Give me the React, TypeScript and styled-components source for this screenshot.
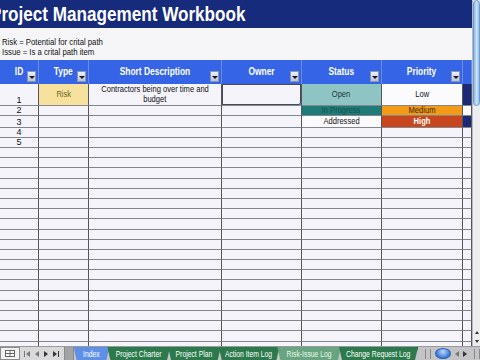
import React from 'react';
import styled, { createGlobalStyle } from 'styled-components';

const FONT = `"Liberation Sans", Arial, sans-serif`;

const GlobalStyle = createGlobalStyle`
  html, body {
    margin: 0;
    padding: 0;
    overflow: hidden;
    background: #f4f4f9;
  }
  body {
    font-family: ${FONT};
  }
`;

const COLS = '39px 50px 133px 80px 80px 81px 9px';

// the source screenshot is horizontally condensed, so text is squeezed to match
const Squeeze = styled.span<{ $left?: boolean; $k?: number }>`
  display: inline-block;
  white-space: nowrap;
  transform: scaleX(${(p) => p.$k ?? 0.84});
  transform-origin: ${(p) => (p.$left ? 'left center' : 'center')};
`;

const Window = styled.div`
  width: 480px;
  height: 360px;
  display: flex;
  flex-direction: column;
  overflow: hidden;
`;

const Body = styled.div`
  flex: 1;
  display: flex;
  min-height: 0;
`;

const Sheet = styled.div`
  width: 472px;
  display: flex;
  flex-direction: column;
  overflow: hidden;
  background: #f4f4f9;
`;

const TitleBar = styled.div`
  height: 28px;
  flex-shrink: 0;
  background: #172b7c;
  overflow: hidden;
  white-space: nowrap;
`;

const Title = styled.h1`
  margin: 0 0 0 -10px;
  color: #fff;
  font: bold 21px/27px ${FONT};
`;

const Notes = styled.div`
  height: 32px;
  flex-shrink: 0;
  box-sizing: border-box;
  display: flex;
  flex-direction: column;
  padding: 10px 0 0 2px;
  font-size: 9px;
  line-height: 9.5px;
  color: #111;
  background: #f6f6f8;
`;

const Row = styled.div<{ $h: number }>`
  display: grid;
  grid-template-columns: ${COLS};
  height: ${(p) => p.$h}px;
  flex-shrink: 0;
`;

const HeadCell = styled.div`
  position: relative;
  box-sizing: border-box;
  display: flex;
  align-items: center;
  justify-content: center;
  padding-bottom: 1px;
  background: #3564e6;
  color: #fff;
  font-weight: bold;
  font-size: 10px;
  border-right: 1px solid #6f8bd8;
`;

const FilterButton = styled.span`
  position: absolute;
  right: 2px;
  bottom: 2px;
  width: 9px;
  height: 11px;
  box-sizing: border-box;
  display: flex;
  align-items: flex-end;
  justify-content: center;
  padding-bottom: 2px;
  background: linear-gradient(#eef1f7, #b8c1d4);
  border: 1px solid #8a97b4;

  &::after {
    content: '';
    border-left: 3px solid transparent;
    border-right: 3px solid transparent;
    border-top: 3px solid #1a1a1a;
  }
`;

type VAlign = 'top' | 'center' | 'bottom';

const Cell = styled.div<{ $bg?: string; $color?: string; $valign?: VAlign; $bold?: boolean; $selected?: boolean }>`
  position: relative;
  box-sizing: border-box;
  display: flex;
  flex-direction: column;
  align-items: center;
  justify-content: ${(p) => (p.$valign === 'top' ? 'flex-start' : p.$valign === 'bottom' ? 'flex-end' : 'center')};
  padding: ${(p) => (p.$valign === 'top' ? '1px 2px 0' : '0 2px')};
  overflow: hidden;
  text-align: center;
  white-space: nowrap;
  font-size: 9px;
  line-height: 9.5px;
  font-weight: ${(p) => (p.$bold ? 'bold' : 'normal')};
  background: ${(p) => p.$bg ?? '#f4f4fa'};
  color: ${(p) => p.$color ?? '#111'};
  border-right: 1px solid #55555c;
  border-bottom: 1px solid #85858d;
  box-shadow: ${(p) => (p.$selected ? 'inset 0 0 0 1px #4a4a52' : 'none')};

  ${(p) =>
    p.$selected &&
    `&::after {
      content: '';
      position: absolute;
      right: -1px;
      bottom: -1px;
      width: 3px;
      height: 3px;
      background: #4f7fd6;
    }`}
`;

const VScroll = styled.div`
  width: 8px;
  display: flex;
  flex-direction: column;
  box-sizing: border-box;
  background: #ededef;
  border-left: 1px solid #b9b9c0;
`;

const Thumb = styled.div`
  height: 106px;
  box-sizing: border-box;
  background: linear-gradient(90deg, #8ab7e8, #cfe4f8 55%, #94bdea);
  border: 1px solid #6b9bd2;
  border-radius: 4px;
`;

const Track = styled.div`
  flex: 1;
`;

const ScrollArrow = styled.div<{ $up?: boolean }>`
  height: 9px;
  display: flex;
  align-items: center;
  justify-content: center;

  &::after {
    content: '';
    border-left: 2px solid transparent;
    border-right: 2px solid transparent;
    ${(p) => (p.$up ? 'border-bottom: 3px solid #333;' : 'border-top: 3px solid #333;')}
  }
`;

const TabBar = styled.div`
  height: 14px;
  flex-shrink: 0;
  display: flex;
  align-items: stretch;
  background: #c4c4c6;
  border-top: 1px solid #9a9a9e;
  box-sizing: border-box;
`;

const ViewBox = styled.div`
  width: 20px;
  display: flex;
  align-items: center;
  justify-content: center;
  box-sizing: border-box;
  background: #f2f2f2;
  border: 1px solid #8c8c90;
`;

const NavGroup = styled.div`
  width: 44px;
  display: flex;
  align-items: center;
  justify-content: center;
  gap: 5px;
  background: #d9d9db;
`;

const Splitter = styled.div`
  width: 8px;
  background: #a3a3a6;
  border-left: 1px solid #8a8a8e;
  border-right: 1px solid #8a8a8e;
`;

const Tab = styled.div<{ $w: number; $bg: string; $color?: string }>`
  width: ${(p) => p.$w}px;
  display: flex;
  align-items: center;
  justify-content: center;
  font-size: 8.5px;
  color: ${(p) => p.$color ?? '#fff'};
  background: ${(p) => p.$bg};
  border-right: 1px solid #1d5a36;
  white-space: nowrap;
  clip-path: polygon(0 0, 100% 0, calc(100% - 3px) 100%, 3px 100%);
  margin-right: -2px;
`;

const BarRest = styled.div`
  flex: 1;
  display: flex;
  align-items: center;
  padding-left: 6px;
  gap: 4px;
  background: #c4c4c6;
`;

const Oval = styled.div`
  width: 14px;
  height: 9px;
  border-radius: 50%;
  background: radial-gradient(ellipse at 50% 30%, #bcd7fb, #3a78d9 70%);
  border: 1px solid #2b5fb4;
`;

const Grip = styled.div`
  width: 4px;
  height: 10px;
  border-left: 1px solid #8a8a8e;
  border-right: 1px solid #8a8a8e;
  margin-left: 3px;
`;

const Tri = ({ dir, bar }: { dir: 'l' | 'r'; bar?: boolean }) => (
  <svg width={bar ? 6 : 4} height="6" viewBox={bar ? '0 0 6 6' : '0 0 4 6'}>
    {dir === 'l' ? (
      <>
        {bar && <rect x="0" y="0" width="1" height="6" fill="#777" />}
        <path d={bar ? 'M6 0 L2 3 L6 6 Z' : 'M4 0 L0 3 L4 6 Z'} fill="#777" />
      </>
    ) : (
      <>
        <path d="M0 0 L4 3 L0 6 Z" fill="#333" />
        {bar && <rect x="5" y="0" width="1" height="6" fill="#333" />}
      </>
    )}
  </svg>
);

const GridIcon = () => (
  <svg width="10" height="7" viewBox="0 0 10 7">
    <rect x="0.5" y="0.5" width="9" height="6" fill="#fff" stroke="#666" />
    <line x1="5" y1="0.5" x2="5" y2="6.5" stroke="#666" />
    <line x1="0.5" y1="3.5" x2="9.5" y2="3.5" stroke="#666" />
  </svg>
);

const headers = ['ID', 'Type', 'Short Description', 'Owner', 'Status', 'Priority'];

const NAVY = '#1b2a78';

const tabs = [
  { label: 'Index', w: 35, bg: '#5f90e8' },
  { label: 'Project Charter', w: 62, bg: '#2c7a4b' },
  { label: 'Project Plan', w: 52, bg: '#2c7a4b' },
  { label: 'Action Item Log', w: 60, bg: '#2c7a4b' },
  { label: 'Risk-Issue Log', w: 63, bg: '#66a57f', color: '#eef6f0' },
  { label: 'Change Request Log', w: 78, bg: '#2c7a4b' },
];

const emptyRows = Array.from({ length: 20 }, (_, i) => i);

const Text = ({ children }: { children: React.ReactNode }) => <Squeeze>{children}</Squeeze>;

export default function App() {
  return (
    <Window>
      <GlobalStyle />
      <Body>
        <Sheet>
          <TitleBar>
            <Title>
              <Squeeze $left $k={0.815}>
                Project Management Workbook
              </Squeeze>
            </Title>
          </TitleBar>
          <Notes>
            <Squeeze $left $k={0.86}>Risk = Potential for crital path</Squeeze>
            <Squeeze $left $k={0.86}>Issue = Is a crital path item</Squeeze>
          </Notes>

          <Row $h={24}>
            {headers.map((h) => (
              <HeadCell key={h}>
                <Text>{h}</Text>
                <FilterButton />
              </HeadCell>
            ))}
            <HeadCell />
          </Row>

          <Row $h={22}>
            <Cell $valign="bottom">1</Cell>
            <Cell $bg="#f6e29c" $color="#6f6228">
              <Text>Risk</Text>
            </Cell>
            <Cell $valign="top">
              <Text>Contractors being over time and</Text>
              <Text>budget</Text>
            </Cell>
            <Cell $selected />
            <Cell $bg="#8fc4c5" $color="#1c3838">
              <Text>Open</Text>
            </Cell>
            <Cell $bg="#fbfbfd">
              <Text>Low</Text>
            </Cell>
            <Cell $bg={NAVY} />
          </Row>

          <Row $h={10}>
            <Cell $valign="bottom">2</Cell>
            <Cell />
            <Cell />
            <Cell />
            <Cell $bg="#1f7b78" $color="#14524f">
              <Text>In Progress</Text>
            </Cell>
            <Cell $bg="#f39b17" $color="#3b2500">
              <Text>Medium</Text>
            </Cell>
            <Cell $bg="#fbfbfd" />
          </Row>

          <Row $h={12}>
            <Cell $valign="bottom">3</Cell>
            <Cell />
            <Cell />
            <Cell />
            <Cell $bg="#fbfbfd">
              <Text>Addressed</Text>
            </Cell>
            <Cell $bg="#c8461d" $color="#fff" $bold>
              <Text>High</Text>
            </Cell>
            <Cell $bg={NAVY} />
          </Row>

          {['4', '5'].map((n) => (
            <Row $h={10} key={n}>
              <Cell $valign="bottom">{n}</Cell>
              <Cell />
              <Cell />
              <Cell />
              <Cell />
              <Cell />
              <Cell />
            </Row>
          ))}

          {emptyRows.map((i) => (
            <Row $h={10.2} key={i}>
              <Cell />
              <Cell />
              <Cell />
              <Cell />
              <Cell />
              <Cell />
              <Cell />
            </Row>
          ))}
        </Sheet>

        <VScroll>
          <Thumb />
          <Track />
          <ScrollArrow $up />
          <ScrollArrow />
        </VScroll>
      </Body>

      <TabBar>
        <ViewBox>
          <GridIcon />
        </ViewBox>
        <NavGroup>
          <Tri dir="l" bar />
          <Tri dir="l" />
          <Tri dir="r" />
          <Tri dir="r" bar />
        </NavGroup>
        <Splitter />
        {tabs.map((t) => (
          <Tab key={t.label} $w={t.w} $bg={t.bg} $color={t.color}>
            <Squeeze $k={0.8}>{t.label}</Squeeze>
          </Tab>
        ))}
        <BarRest>
          <Grip />
          <Oval />
          <Tri dir="l" />
          <Tri dir="r" />
          <Grip />
        </BarRest>
      </TabBar>
    </Window>
  );
}
